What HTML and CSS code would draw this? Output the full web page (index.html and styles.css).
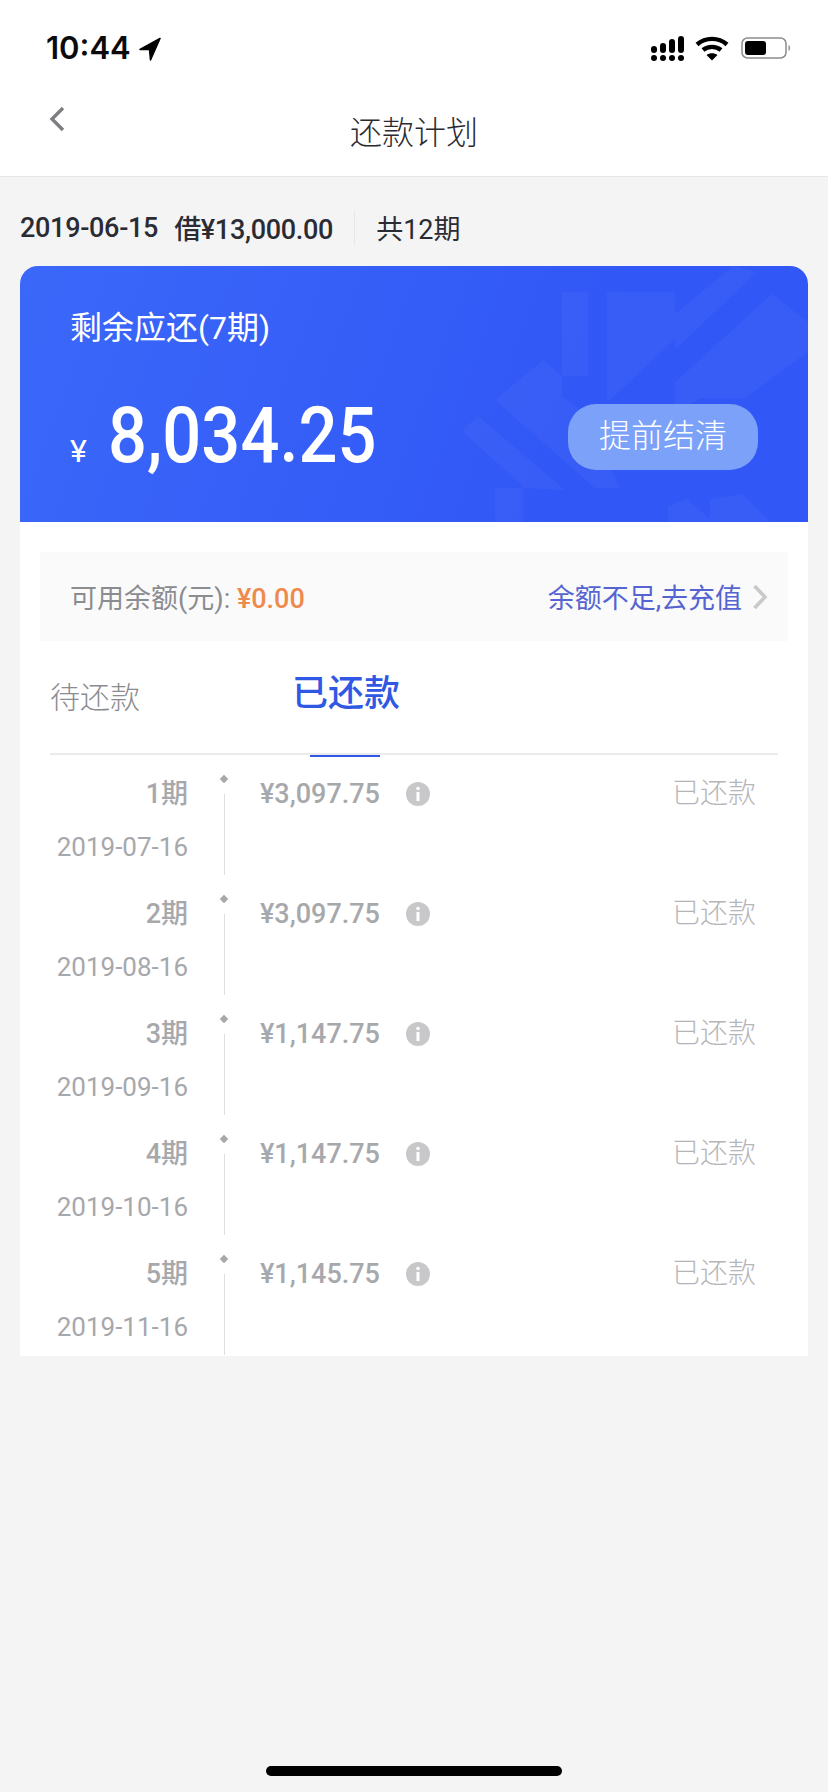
FILE: index.html
```html
<!DOCTYPE html>
<html lang="zh-CN">
<head>
    <meta charset="UTF-8">
    <meta name="viewport" content="width=device-width, initial-scale=1.0">
    <link rel="stylesheet" href="styles.css">
    <title>还款计划</title>
</head>
<body>
    <div class="top">
        <div class="status">
            <div class="time">10:44
                <svg class="arrow" width="22" height="24" viewBox="0 0 22 24"><path d="M21 1.5 L1 12.5 L10.5 12.5 L11.5 23 Z" fill="#000" stroke="#000" stroke-width="1.5" stroke-linejoin="round"/></svg>
            </div>
            <div class="status-icons">
                <svg width="36" height="26" viewBox="0 0 36 26" fill="#000">
                    <rect x="1" y="11" width="6" height="7" rx="3"/><rect x="10" y="8" width="6" height="10" rx="3"/><rect x="19" y="4" width="6" height="14" rx="3"/><rect x="28" y="1" width="6" height="17" rx="3"/>
                    <circle cx="4" cy="23" r="3"/><circle cx="13" cy="23" r="3"/><circle cx="22" cy="23" r="3"/><circle cx="31" cy="23" r="3"/>
                </svg>
                <svg class="wifi" width="34" height="26" viewBox="0 0 34 26" fill="none" stroke="#000" stroke-width="4.4">
                    <path d="M2 9.5 C10.5 2 23.5 2 32 9.5"/><path d="M8 15 C13 10.8 21 10.8 26 15"/><path d="M17 25.5 L11.5 20 C14.5 17.6 19.5 17.6 22.5 20 Z" fill="#000" stroke="none"/>
                </svg>
                <svg class="battery" width="50" height="22" viewBox="0 0 50 22">
                    <rect x="1" y="1" width="44" height="20" rx="5.5" fill="none" stroke="#8c8c8c" stroke-width="1.5"/>
                    <rect x="4" y="4" width="21" height="14" rx="3" fill="#000"/>
                    <path d="M47.5 8 C49.5 8.6 49.5 13.4 47.5 14 Z" fill="#8c8c8c"/>
                </svg>
            </div>
        </div>
        <div class="nav">
            <svg class="back" width="18" height="26" viewBox="0 0 18 26"><path d="M15 2 L4 13 L15 24" fill="none" stroke="#7d7e83" stroke-width="3.4"/></svg>
            <div class="nav-title">还款计划</div>
        </div>
    </div>

    <div class="meta">
        <span class="meta-date">2019-06-15</span>
        <span class="meta-loan">借¥13,000.00</span>
        <span class="meta-sep"></span>
        <span class="meta-total">共12期</span>
    </div>

    <div class="summary">
        <svg class="pattern" width="788" height="256" viewBox="0 0 788 256" fill="#fff" fill-opacity="0.035">
            <rect x="542" y="26" width="26" height="84"/>
            <path d="M587 26 H655 V73 L587 137 Z"/>
            <path d="M655 48 L713 0 L737 6 L655 84 Z"/>
            <path d="M655 116 L752 28 L788 56 V86 L725 132 H680 L655 150 Z"/>
            <path d="M475 134 L523 94 L542 110 V130 L568 150 L600 222 L575 222 Z"/>
            <path d="M442 165 L458 150 L545 224 L505 222 Z"/>
            <rect x="475" y="222" width="28" height="34"/>
            <path d="M648 240 L667 233 L690 253 V233 L723 228 L750 256 H648 Z"/>
        </svg>
        <div class="summary-title">剩余应还(7期)</div>
        <div class="summary-row">
            <div class="summary-amount"><span class="yen">¥</span><span class="big">8,034.25</span></div>
            <div class="settle">提前结清</div>
        </div>
    </div>

    <div class="panel">
        <div class="balance">
            <div class="balance-left">可用余额(元): <span class="balance-num">¥0.00</span></div>
            <div class="balance-right">余额不足,去充值
                <svg width="16" height="26" viewBox="0 0 16 26"><path d="M2.5 2 L13 13 L2.5 24" fill="none" stroke="#c9c9cb" stroke-width="3.6"/></svg>
            </div>
        </div>

        <div class="tabs">
            <div class="tab">待还款</div>
            <div class="tab tab-on">已还款</div>
        </div>

        <div class="row">
            <div class="period"><div class="period-no">1期</div><div class="period-date">2019-07-16</div></div>
            <div class="track"><i class="dot"></i><i class="line"></i></div>
            <div class="amount">¥3,097.75</div>
            <svg class="info" width="24" height="24" viewBox="0 0 24 24"><circle cx="12" cy="12" r="12" fill="#c8c8ca"/><circle cx="12" cy="6.5" r="1.8" fill="#fff"/><rect x="10.5" y="10" width="3" height="9" fill="#fff"/></svg>
            <div class="state">已还款</div>
        </div>
        <div class="row">
            <div class="period"><div class="period-no">2期</div><div class="period-date">2019-08-16</div></div>
            <div class="track"><i class="dot"></i><i class="line"></i></div>
            <div class="amount">¥3,097.75</div>
            <svg class="info" width="24" height="24" viewBox="0 0 24 24"><circle cx="12" cy="12" r="12" fill="#c8c8ca"/><circle cx="12" cy="6.5" r="1.8" fill="#fff"/><rect x="10.5" y="10" width="3" height="9" fill="#fff"/></svg>
            <div class="state">已还款</div>
        </div>
        <div class="row">
            <div class="period"><div class="period-no">3期</div><div class="period-date">2019-09-16</div></div>
            <div class="track"><i class="dot"></i><i class="line"></i></div>
            <div class="amount">¥1,147.75</div>
            <svg class="info" width="24" height="24" viewBox="0 0 24 24"><circle cx="12" cy="12" r="12" fill="#c8c8ca"/><circle cx="12" cy="6.5" r="1.8" fill="#fff"/><rect x="10.5" y="10" width="3" height="9" fill="#fff"/></svg>
            <div class="state">已还款</div>
        </div>
        <div class="row">
            <div class="period"><div class="period-no">4期</div><div class="period-date">2019-10-16</div></div>
            <div class="track"><i class="dot"></i><i class="line"></i></div>
            <div class="amount">¥1,147.75</div>
            <svg class="info" width="24" height="24" viewBox="0 0 24 24"><circle cx="12" cy="12" r="12" fill="#c8c8ca"/><circle cx="12" cy="6.5" r="1.8" fill="#fff"/><rect x="10.5" y="10" width="3" height="9" fill="#fff"/></svg>
            <div class="state">已还款</div>
        </div>
        <div class="row">
            <div class="period"><div class="period-no">5期</div><div class="period-date">2019-11-16</div></div>
            <div class="track"><i class="dot"></i><i class="line"></i></div>
            <div class="amount">¥1,145.75</div>
            <svg class="info" width="24" height="24" viewBox="0 0 24 24"><circle cx="12" cy="12" r="12" fill="#c8c8ca"/><circle cx="12" cy="6.5" r="1.8" fill="#fff"/><rect x="10.5" y="10" width="3" height="9" fill="#fff"/></svg>
            <div class="state">已还款</div>
        </div>
    </div>

    <div class="home-bar"></div>
</body>
</html>
```

FILE: styles.css
```css
* {
    box-sizing: border-box;
}

body {
    margin: 0;
    height: 1792px;
    overflow: hidden;
    display: flex;
    flex-direction: column;
    background-color: #f4f4f5;
    font-family: Roboto, "Noto Sans CJK SC", sans-serif;
}

.top {
    background-color: #fff;
    border-bottom: 1px solid #e6e6e8;
    height: 177px;
}

.status {
    height: 72px;
    padding: 24px 37px 0 46px;
    display: flex;
    justify-content: space-between;
    align-items: flex-start;
}

.time {
    display: flex;
    align-items: center;
    gap: 8px;
    font-family: Inter, sans-serif;
    font-size: 31px;
    line-height: 48px;
    font-weight: 600;
    color: #0b0b0d;
}

.arrow {
    margin-top: 2px;
}

.status-icons {
    display: flex;
    align-items: center;
    gap: 9px;
    height: 48px;
}

.wifi {
    margin-right: 3px;
}

.nav {
    height: 104px;
    padding-left: 48px;
    display: flex;
    align-items: center;
    position: relative;
}

.back {
    margin-top: -10px;
}

.nav-title {
    position: absolute;
    left: 0;
    right: 0;
    top: 40px;
    text-align: center;
    font-size: 32px;
    line-height: 42px;
    color: #2a2b30;
    font-weight: 300;
}

.meta {
    height: 89px;
    padding: 12px 0 0 20px;
    display: flex;
    align-items: center;
    font-size: 27px;
    font-weight: 500;
    color: #2b2c33;
}

.meta-date {
    letter-spacing: -0.3px;
}

.meta-loan {
    margin-left: 16px;
    letter-spacing: -0.3px;
}

.meta-sep {
    width: 1px;
    height: 34px;
    margin: 0 21px;
    background-color: #e6e6e8;
}

.meta-total {
    font-weight: 400;
}

.summary {
    margin: 0 20px;
    height: 256px;
    padding: 41px 50px 0;
    border-radius: 18px 18px 0 0;
    background: linear-gradient(110deg, #3b68f9 0%, #3157f6 70%);
    color: #fff;
    position: relative;
    overflow: hidden;
}

.pattern {
    position: absolute;
    left: 0;
    top: 0;
}

.summary-title {
    font-size: 32px;
    line-height: 42px;
    position: relative;
}

.summary-row {
    margin-top: 54px;
    display: flex;
    justify-content: space-between;
    align-items: center;
    position: relative;
}

.summary-amount {
    display: flex;
    align-items: baseline;
}

.yen {
    font-size: 32px;
    width: 38px;
}

.big {
    display: inline-block;
    font-size: 78px;
    line-height: 66px;
    font-weight: 500;
    transform: scaleX(0.88);
    transform-origin: left center;
}

.settle {
    width: 190px;
    height: 66px;
    margin-right: -0px;
    border-radius: 28px;
    background-color: #7ba1f8;
    text-align: center;
    font-size: 32px;
    line-height: 64px;
    font-weight: 300;
}

.panel {
    margin: 0 20px;
    height: 834px;
    padding-top: 30px;
    background-color: #fff;
}

.balance {
    margin: 0 20px;
    height: 89px;
    padding: 0 20px 0 30px;
    display: flex;
    justify-content: space-between;
    align-items: center;
    background-color: #fafafb;
    font-size: 27px;
}

.balance-left {
    color: #8b8c90;
}

.balance-num {
    color: #ef8a4f;
    font-weight: 500;
}

.balance-right {
    display: flex;
    align-items: center;
    gap: 10px;
    color: #5564d0;
}

.tabs {
    margin: 0 30px;
    height: 114px;
    padding-top: 30px;
    display: flex;
    align-items: flex-start;
    border-bottom: 2px solid #ebebee;
}

.tab {
    width: 242px;
    font-size: 30px;
    line-height: 46px;
    color: #8b8c90;
    font-weight: 300;
    padding-top: 4px;
}

.tab-on {
    position: relative;
    font-size: 36px;
    color: #3058e4;
    font-weight: 500;
    padding-top: 0;
}

.tab-on::after {
    content: "";
    position: absolute;
    left: 18px;
    top: 84px;
    width: 70px;
    height: 2px;
    background-color: #3058e4;
}

.row {
    height: 120px;
    display: flex;
    align-items: flex-start;
    color: #a7a8ac;
}

.period {
    width: 168px;
    text-align: right;
}

.period-no {
    margin-top: 20px;
    font-size: 27px;
    line-height: 38px;
    font-weight: 500;
}

.period-date {
    margin-top: 15px;
    font-size: 26px;
    line-height: 38px;
}

.track {
    width: 72px;
    height: 120px;
    padding-top: 21px;
    display: flex;
    flex-direction: column;
    align-items: center;
}

.dot {
    width: 6px;
    height: 6px;
    background-color: #a7a8ac;
    transform: rotate(45deg);
}

.line {
    width: 1px;
    margin-top: 12px;
    flex: 1;
    background-color: #dfdfe2;
}

.amount {
    width: 146px;
    margin-top: 20px;
    font-size: 27px;
    line-height: 38px;
    font-weight: 500;
}

.info {
    margin-top: 27px;
}

.state {
    margin-top: 20px;
    margin-left: 242px;
    font-size: 28px;
    line-height: 38px;
    font-weight: 300;
    color: #b4b5b8;
}

.home-bar {
    position: absolute;
    left: 266px;
    top: 1766px;
    width: 296px;
    height: 10px;
    border-radius: 5px;
    background-color: #000;
}
```
